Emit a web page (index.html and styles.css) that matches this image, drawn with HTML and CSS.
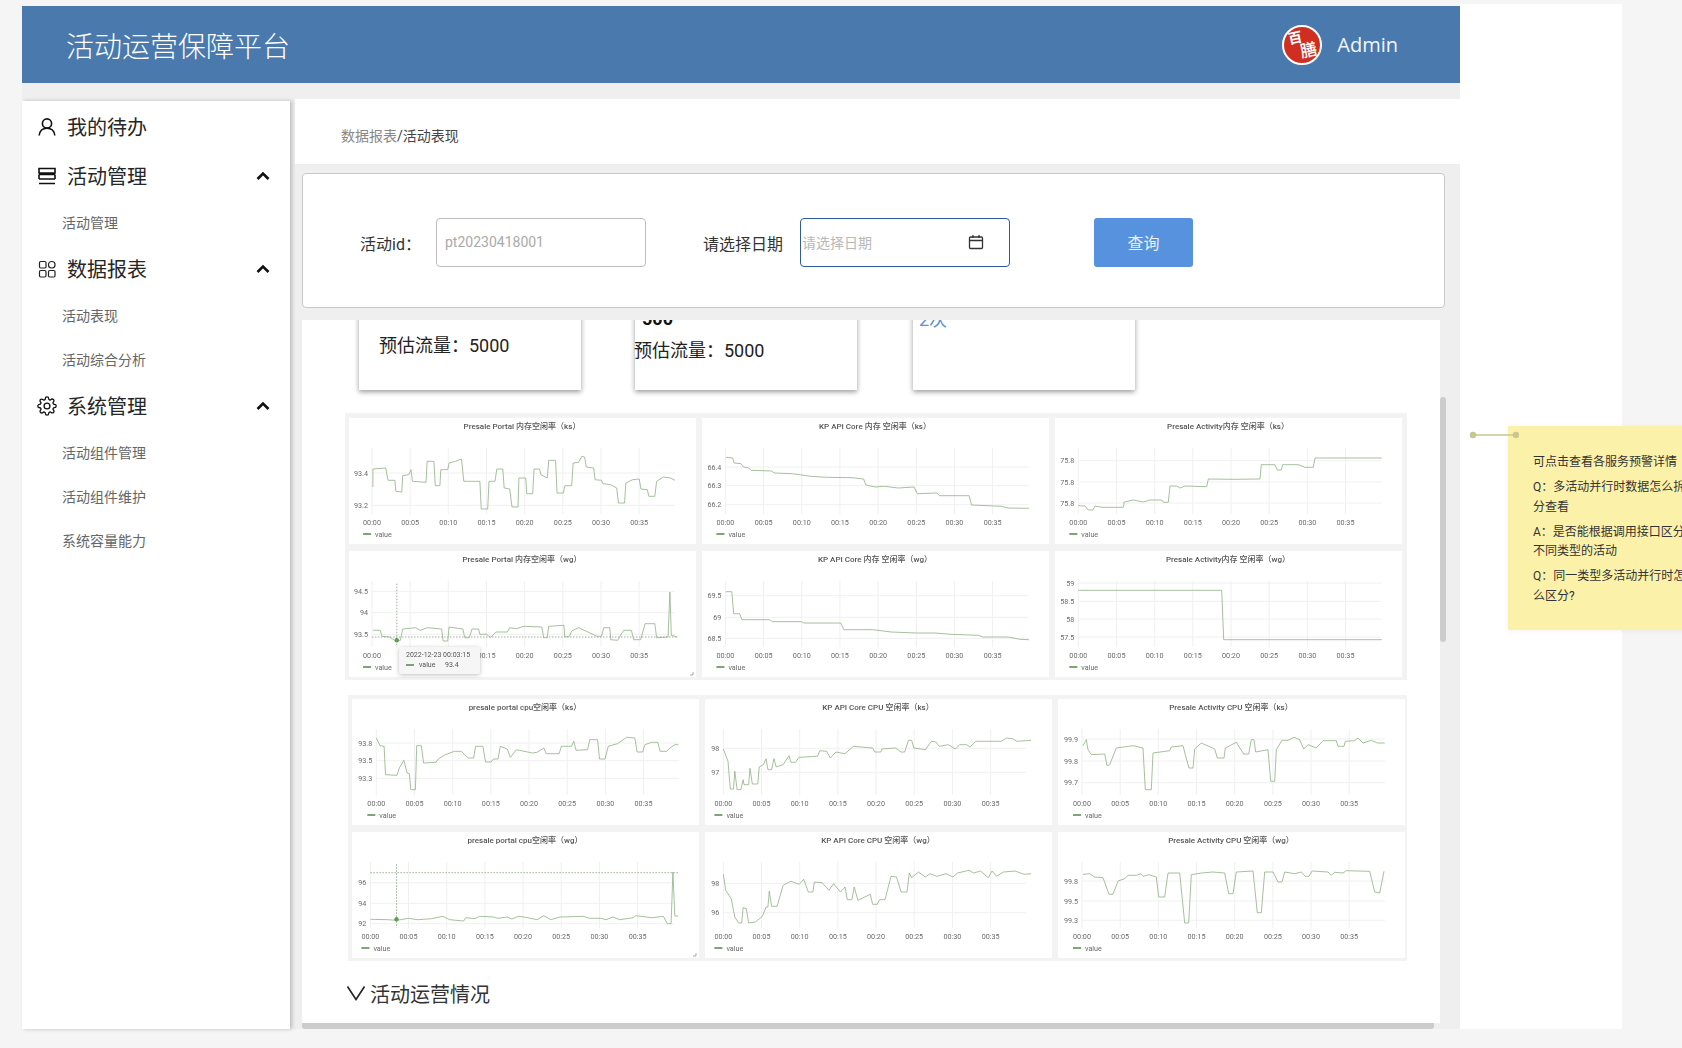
FILE: index.html
```html
<!DOCTYPE html>
<html lang="zh-CN">
<head>
<meta charset="utf-8">
<title>活动运营保障平台</title>
<link rel="stylesheet" href="styles.css">
</head>
<body>
<div class="app">
  <div class="main">
    <header class="topbar">
      <h1 class="brand">活动运营保障平台</h1>
      <div class="user">
        <span class="logo"><span class="logo-a">百</span><span class="logo-b">膳</span></span>
        <span class="user-name">Admin</span>
      </div>
    </header>
    <div class="workspace">
      <nav class="sidebar">
        <div class="nav-item">
          <svg class="nav-icon" viewBox="0 0 20 20"><circle cx="10" cy="6.5" r="4.6"/><path d="M2.2 18.5c.5-4.5 3.6-7.2 7.8-7.2s7.300 2.700 7.800 7.200"/></svg>
          <span>我的待办</span>
        </div>
        <div class="nav-item">
          <svg class="nav-icon" viewBox="0 0 20 20"><path d="M2 2.500h16v4.500h-16zM2 8.500h16M2 13h16M2 17.500h16"/><path d="M2 8.500v4.500M18 8.500v4.500"/></svg>
          <span>活动管理</span>
          <svg class="chev" viewBox="0 0 14 10"><path d="M1.500 8 7 2.500 12.500 8"/></svg>
        </div>
        <a class="nav-sub">活动管理</a>
        <div class="nav-item">
          <svg class="nav-icon nav-icon-thin" viewBox="0 0 20 20"><rect x="2.500" y="2.500" width="6.500" height="6.500" rx="1.200"/><rect x="11.500" y="2.500" width="6.500" height="6.500" rx="3"/><rect x="2.500" y="11.500" width="6.500" height="6.500" rx="1.200"/><rect x="11.500" y="11.500" width="6.500" height="6.500" rx="1.200"/></svg>
          <span>数据报表</span>
          <svg class="chev" viewBox="0 0 14 10"><path d="M1.500 8 7 2.500 12.500 8"/></svg>
        </div>
        <a class="nav-sub">活动表现</a>
        <a class="nav-sub">活动综合分析</a>
        <div class="nav-item">
          <svg class="nav-icon" viewBox="0 0 24 24"><circle cx="12" cy="12" r="3.500"/><path d="M19.400 15a1.650 1.650 0 0 0 .33 1.820l.06.06a2 2 0 0 1 0 2.830 2 2 0 0 1-2.830 0l-.06-.06a1.650 1.650 0 0 0-1.820-.33 1.650 1.650 0 0 0-1 1.510V21a2 2 0 0 1-2 2 2 2 0 0 1-2-2v-.09A1.650 1.650 0 0 0 9 19.400a1.650 1.650 0 0 0-1.820.33l-.06.06a2 2 0 0 1-2.830 0 2 2 0 0 1 0-2.830l.06-.06a1.650 1.650 0 0 0 .33-1.820 1.650 1.650 0 0 0-1.510-1H3a2 2 0 0 1-2-2 2 2 0 0 1 2-2h.09A1.650 1.650 0 0 0 4.600 9a1.650 1.650 0 0 0-.33-1.820l-.06-.06a2 2 0 0 1 0-2.830 2 2 0 0 1 2.830 0l.06.06a1.650 1.650 0 0 0 1.820.33H9a1.650 1.650 0 0 0 1-1.510V3a2 2 0 0 1 2-2 2 2 0 0 1 2 2v.09a1.650 1.650 0 0 0 1 1.510 1.650 1.650 0 0 0 1.820-.33l.06-.06a2 2 0 0 1 2.830 0 2 2 0 0 1 0 2.830l-.06.06a1.650 1.650 0 0 0-.33 1.820V9a1.650 1.650 0 0 0 1.510 1H21a2 2 0 0 1 2 2 2 2 0 0 1-2 2h-.09a1.650 1.650 0 0 0-1.510 1z"/></svg>
          <span>系统管理</span>
          <svg class="chev" viewBox="0 0 14 10"><path d="M1.500 8 7 2.500 12.500 8"/></svg>
        </div>
        <a class="nav-sub">活动组件管理</a>
        <a class="nav-sub">活动组件维护</a>
        <a class="nav-sub">系统容量能力</a>
      </nav>
      <section class="content">
        <div class="crumbs"><span class="crumb-parent">数据报表</span>/活动表现</div>
        <form class="filter">
          <label class="filter-label label-id">活动id：</label>
          <div class="field field-id"><span class="ph ph-id">pt20230418001</span></div>
          <label class="filter-label label-date">请选择日期</label>
          <div class="field field-date">
            <span class="ph ph-date">请选择日期</span>
            <svg class="cal" viewBox="0 0 16 16"><rect x="1.500" y="3" width="13" height="11.500" rx="1"/><path d="M1.500 6.500h13M5 1v3M11 1v3"/></svg>
          </div>
          <div class="btn">查询</div>
        </form>
        <div class="pane">
          <div class="scroll">
            <div class="cards">
              <div class="card"><p class="card-text t1">预估流量：5000</p></div>
              <div class="card"><p class="card-bold">500</p><p class="card-text t2">预估流量：5000</p></div>
              <div class="card"><p class="card-link">2次</p></div>
            </div>
            <div class="chart-group group-a" data-group="a"></div>
            <div class="chart-group group-b" data-group="b"></div>
            <div class="section-title">
              <svg class="section-chev" viewBox="0 0 20 16"><path d="M1.500 1.500 10 14.500 18.500 1.500"/></svg>
              <span>活动运营情况</span>
            </div>
          </div>
          <div class="vbar"></div>
          <div class="hbar"></div>
        </div>
      </section>
    </div>
  </div>
  <div class="blank"></div>
</div>
<svg class="connector" viewBox="0 0 50 10"><path d="M4 5h43"/><circle cx="4" cy="5" r="2.500"/><circle cx="47" cy="5" r="2.500"/></svg>
<aside class="note">
  <p>可点击查看各服务预警详情</p>
  <p>Q：多活动并行时数据怎么拆分查看</p>
  <p>A：是否能根据调用接口区分不同类型的活动</p>
  <p>Q：同一类型多活动并行时怎么区分?</p>
</aside>
<script src="charts.js"></script>
</body>
</html>
```

FILE: styles.css
```css
* { box-sizing: border-box; }
html, body { margin: 0; height: 100%; overflow: hidden; }
body {
  background: #f5f5f6;
  padding: 6px 0 0 22px;
  font-family: Roboto, "Noto Sans CJK SC", sans-serif;
  color: #333;
  position: relative;
}
p, h1 { margin: 0; font-weight: 400; }

.app { display: flex; width: 1600px; height: 1023px; }
.main { width: 1438px; display: flex; flex-direction: column; background: #efefef; }
.blank { flex: 1; background: #fff; margin-top: -2px; }

.topbar {
  height: 77px; background: #4a7aad; color: #fff;
  display: flex; align-items: center; justify-content: space-between;
  padding: 0 62px 0 44px; flex: none;
}
.brand { font-size: 28px; font-weight: 300; }
.user { display: flex; align-items: center; gap: 15px; }
.logo {
  width: 40px; height: 40px; border-radius: 50%; background: #cf2e20;
  border: 2px solid #fff; position: relative; overflow: hidden; display: block;
}
.logo-a { position: absolute; left: 4px; top: 3px; font-size: 14px; line-height: 16px; color: #fff; font-weight: 700; transform: rotate(-12deg); }
.logo-b { position: absolute; left: 16px; top: 13px; font-size: 17px; line-height: 20px; color: #fff; font-weight: 500; transform: rotate(-12deg); }
.user-name { font-family: "Open Sans", sans-serif; font-size: 20px; color: #f2f6fa; }

.workspace { flex: 1; display: flex; min-height: 0; }
.sidebar {
  width: 268px; margin-top: 18px; padding-top: 1px; background: #fff;
  box-shadow: 2px 0 4px rgba(0,0,0,.22); flex: none; position: relative;
}
.nav-item {
  height: 49px; display: flex; align-items: center; padding: 0 20px 0 15px;
  font-size: 20px; color: #262626;
}
.nav-item span { margin-left: 10px; flex: 1; }
.nav-icon { width: 20px; height: 20px; fill: none; stroke: #111; stroke-width: 1.600; flex: none; }
.nav-icon-thin { stroke-width: 1.200; stroke: #222; }
.chev { width: 14px; height: 10px; fill: none; stroke: #111; stroke-width: 2.600; flex: none; }
.nav-sub { display: flex; align-items: center; height: 44px; padding-left: 40px; font-size: 14px; color: #666; }

.content { width: 1170px; margin-top: 16px; padding-left: 5px; display: flex; flex-direction: column; flex: none; }
.crumbs { height: 65px; background: #fff; padding: 0 0 0 46px; line-height: 75px; font-size: 14px; color: #444; flex: none; }
.crumb-parent { color: #888; }
.filter {
  margin: 9px 15px 0 7px; height: 135px; background: #fff; flex: none;
  border: 1px solid #c8c8c8; border-radius: 4px; display: flex; align-items: center; padding-top: 3px;
}
.filter-label { font-size: 16px; color: #333; position: relative; top: 1px; }
.label-id { margin-left: 57px; width: 76px; }
.label-date { margin-left: 57px; width: 97px; }
.field { height: 49px; border-radius: 4px; display: flex; align-items: center; background: #fff; }
.field-id { width: 210px; border: 1px solid #bdbdbd; padding-left: 8px; }
.field-date { width: 210px; border: 1px solid #2f5b9b; padding-left: 1px; justify-content: space-between; padding-right: 25px; }
.ph { font-size: 14px; color: #aaa; }
.ph-date { color: #b8b8b8; }
.cal { width: 16px; height: 16px; fill: none; stroke: #333; stroke-width: 1.300; }
.btn {
  margin-left: 84px; width: 99px; height: 49px; border-radius: 3px; background: #5692dd;
  color: #e8f0fa; font-size: 16px; display: flex; align-items: center; justify-content: center;
}

.pane { margin: 12px 0 0 7px; width: 1138px; flex: 1; position: relative; display: flex; flex-direction: column; min-height: 0; }
.scroll { height: 703px; background: #fff; overflow: hidden; flex: none; }
.vbar { position: absolute; left: 1138px; top: 77px; width: 6px; height: 245px; background: #ccc; border-radius: 3px; }
.hbar { height: 6px; width: 1132px; background: #ccc; border-radius: 0 0 3px 3px; }

.cards { display: flex; margin: -60px 0 0 57px; }
.card { width: 222px; height: 130px; background: #fff; box-shadow: 0 2px 5px rgba(0,0,0,.4); margin-right: 54px; position: relative; flex: none; }
.card:nth-child(2) { margin-right: 56px; }
.card-text { font-size: 18px; line-height: 26px; color: #222; white-space: nowrap; }
.t1 { padding: 73px 0 0 20px; }
.t2 { margin: 8px 0 0 -1px; }
.card-bold { font-size: 18px; font-weight: 700; line-height: 22px; color: #111; padding: 48px 0 0 7px; }
.card-link { font-size: 18px; line-height: 22px; color: #5b93d3; padding: 49px 0 0 6px; }

.chart-group { display: grid; grid-template-columns: repeat(3, 347px); grid-auto-rows: 126px; gap: 7px 6px; background: #f3f3f3; }
.group-a { margin: 23px 0 0 43px; width: 1062px; padding: 5px 4px 3px; }
.group-b { margin: 15px 0 0 46px; width: 1059px; padding: 4px 2px 3px 4px; }
.panel { background: #fff; }
.plot { display: block; width: 347px; height: 126px; filter: blur(.25px); overflow: visible; }
.title { font-size: 8px; font-weight: 500; fill: #555; text-anchor: middle; }
.tick { font-size: 7.200px; fill: #6b6b6b; }
.tick-y { text-anchor: end; }
.tick-x { text-anchor: middle; }
.grid { stroke: #f0f0f0; stroke-width: 1; }
.series { fill: none; stroke: #8fb085; stroke-width: .8; stroke-linejoin: round; }
.swatch { stroke: #5e8f52; stroke-width: 1.600; }
.cross { stroke: #5d7a55; stroke-width: .6; stroke-dasharray: 1.500 1.500; }
.dot { fill: #5ea04f; }
.tip { fill: #f6f6f6; filter: drop-shadow(0 1px 2px rgba(0,0,0,.25)); }
.tip-text { font-size: 7px; fill: #555; }
.corner { fill: none; stroke: #888; stroke-width: .7; }

.section-title { display: flex; align-items: center; gap: 4px; margin: 21px 0 0 44px; font-size: 20px; color: #333; height: 22px; }
.section-chev { width: 20px; height: 16px; fill: none; stroke: #222; stroke-width: 1.600; flex: none; }

.connector { position: absolute; left: 1469px; top: 430px; width: 50px; height: 10px; stroke: #c7c78f; fill: #c7c78f; stroke-width: 1.500; z-index: 2; }
.note {
  position: absolute; left: 1508px; top: 426px; width: 200px; height: 204px;
  background: #fbf1a9; padding: 27px 19px 0 25px; font-size: 12px; line-height: 19.500px; color: #333;
  box-shadow: 0 1px 5px rgba(0,0,0,.06);
}
.note p { width: 156px; margin-bottom: 5.500px; }
```

FILE: charts.js
```js
var NS = 2.178, WS = 3;
var CHARTS = {
  a: [
    { title: "Presale Portal 内存空闲率（ks）", sx: NS, zl: 20, zt: 25, x0: 70, ticks: [["93.4",190],["93.2",287]],
      pts: "72,232 72,178 100,175 105,212 120,212 122,245 135,247 137,198 150,195 155,180 158,215 188,218 190,155 205,155 208,228 218,228 220,180 235,180 238,160 252,155 265,148 270,215 305,215 308,298 322,298 325,215 338,215 342,178 355,178 358,235 370,238 375,292 388,292 390,205 405,205 407,252 420,252 423,178 435,178 438,195 452,205 455,152 470,152 473,250 487,250 490,228 505,228 508,160 520,158 527,140 533,142 537,172 553,175 556,210 570,212 573,222 590,225 603,235 607,280 620,280 623,220 638,210 652,208 656,238 670,240 673,260 686,260 690,215 705,202 720,205 730,212" },
    { title: "KP API Core 内存 空闲率（ks）", sx: NS, zl: 788, zt: 25, x0: 839, ticks: [["66.4",172],["66.3",228],["66.2",285]],
      pts: "840,143 855,145 858,160 873,162 878,172 890,175 895,182 940,184 945,190 985,192 1025,200 1060,203 1115,204 1140,208 1145,226 1165,232 1185,230 1215,235 1250,232 1257,252 1300,250 1305,258 1370,258 1375,286 1440,290 1455,295 1500,296" },
    { title: "Presale Activity内存 空闲率（ks）", sx: WS, zl: 45, zt: 22, x0: 115, ticks: [["75.8",150],["75.8",214],["75.8",277]],
      pts: "115,285 135,286 145,298 158,298 165,286 185,290 250,290 253,274 280,268 310,274 330,268 365,268 370,275 385,275 390,226 410,226 420,232 435,226 500,228 505,205 580,206 660,205 664,162 705,162 712,178 724,178 728,162 775,162 795,170 820,170 825,142 1025,142" },
    { title: "Presale Portal 内存空闲率（wg）", sx: NS, zl: 20, zt: 422, x0: 70, ticks: [["94.5",543],["94",607],["93.5",672]],
      pts: "72,660 88,660 92,678 108,680 120,690 132,690 137,656 165,652 175,660 190,652 222,656 225,692 235,692 238,650 268,656 272,682 282,682 288,656 302,656 305,672 320,672 328,682 340,665 365,665 370,652 385,655 400,648 440,650 444,682 452,682 455,648 488,645 490,680 500,678 505,662 520,652 540,665 560,678 570,678 575,652 588,652 590,688 605,690 618,660 635,660 640,688 655,688 665,640 686,640 690,682 715,680 719,545 722,675 735,680",
      cross: { x: 124, y: 680, y0: 520, y1: 710, x1: 735, dotY: 690 }, corner: true,
      tip: { time: "2022-12-23 00:03:15", value: "93.4" } },
    { title: "KP API Core 内存 空闲率（wg）", sx: NS, zl: 788, zt: 422, x0: 839, ticks: [["69.5",556],["69",621],["68.5",684]],
      pts: "840,544 853,544 857,610 870,610 875,628 935,628 942,634 1005,634 1010,638 1090,638 1097,658 1160,658 1200,665 1255,668 1295,668 1330,672 1390,675 1400,680 1455,680 1480,687 1500,688" },
    { title: "Presale Activity内存 空闲率（wg）", sx: WS, zl: 45, zt: 422, x0: 115, ticks: [["59",518],["58.5",573],["58",626],["57.5",680]],
      pts: "115,540 545,540 551,688 1025,688" }
  ],
  b: [
    { title: "presale portal cpu空闲率（ks）", sx: NS, zl: 27, zt: 28, x0: 80, ticks: [["93.8",160],["93.5",213],["93.3",266]],
      pts: "80,145 88,168 97,170 100,255 125,257 130,235 140,212 147,250 152,252 155,300 165,300 168,168 178,168 183,220 210,218 215,208 230,195 250,185 265,185 280,205 292,205 296,170 312,170 318,217 330,217 335,208 345,208 350,170 365,178 372,203 385,180 420,190 430,188 445,175 450,192 478,192 483,170 505,170 510,155 515,182 540,180 545,150 562,150 566,208 578,208 585,170 605,162 625,143 643,145 648,187 660,187 665,165 680,158 693,158 698,185 712,185 720,175 730,165 738,165" },
    { title: "KP API Core CPU 空闲率（ks）", sx: NS, zl: 795, zt: 28, x0: 835, ticks: [["98",176],["97",248]],
      pts: "835,178 845,215 850,298 857,298 860,245 865,300 873,300 878,270 880,285 890,285 893,236 898,283 910,283 913,232 922,225 928,207 932,240 940,240 945,207 950,232 965,225 978,198 982,218 992,218 1000,203 1040,200 1045,183 1060,185 1068,205 1080,187 1100,192 1118,170 1160,175 1165,187 1178,187 1180,178 1210,175 1222,187 1230,187 1238,152 1245,152 1250,175 1275,180 1288,155 1298,157 1305,170 1325,165 1340,178 1350,165 1365,165 1372,172 1385,155 1440,155 1452,145 1465,147 1475,155 1505,152" },
    { title: "Presale Activity CPU 空闲率（ks）", sx: WS, zl: 50, zt: 28, x0: 122, ticks: [["99.9",148],["99.8",214],["99.7",279]],
      pts: "125,168 135,150 140,180 150,195 190,193 197,228 205,225 225,175 275,168 305,175 312,300 330,300 335,190 385,183 390,172 425,168 432,195 443,235 455,235 460,178 480,160 520,178 528,205 548,205 552,175 585,158 607,193 622,193 630,150 638,150 643,187 680,180 688,275 700,275 705,180 722,152 740,152 758,143 775,150 787,178 800,165 825,175 845,153 885,153 890,170 908,170 912,155 940,153 950,145 965,160 990,152 1008,160 1030,160" },
    { title: "presale portal cpu空闲率（wg）", sx: NS, zl: 27, zt: 425, x0: 67, ticks: [["96",577],["94",639],["92",700]],
      pts: "67,687 105,688 125,690 150,684 170,688 200,685 225,678 240,688 270,692 275,682 295,685 305,678 335,680 345,684 365,680 375,686 390,678 410,682 430,688 445,676 460,688 480,680 530,678 545,684 570,684 580,688 595,680 610,688 640,682 645,676 680,682 705,678 714,700 722,700 726,545 730,677 738,677",
      cross: { x: 124, y: 547, y0: 522, y1: 712, x1: 740, dotY: 687 }, corner: true },
    { title: "KP API Core CPU 空闲率（wg）", sx: NS, zl: 795, zt: 425, x0: 835, ticks: [["98",579],["96",667]],
      pts: "835,552 840,600 852,625 860,680 868,698 875,698 878,652 885,655 890,698 905,695 920,678 928,650 932,650 935,602 940,648 952,648 965,585 982,573 1000,582 1010,567 1020,605 1030,605 1033,575 1050,577 1065,600 1075,580 1090,605 1100,590 1105,628 1115,628 1120,590 1128,630 1155,612 1160,642 1170,642 1175,628 1187,628 1200,558 1212,560 1222,605 1235,605 1240,548 1245,562 1260,545 1275,560 1285,550 1300,558 1320,550 1335,560 1345,548 1370,540 1380,548 1395,542 1412,562 1420,542 1430,558 1445,545 1470,542 1490,552 1505,550" },
    { title: "Presale Activity CPU 空闲率（wg）", sx: WS, zl: 50, zt: 425, x0: 122, ticks: [["99.8",572],["99.5",632],["99.3",690]],
      pts: "125,552 145,550 160,560 185,562 203,612 215,612 230,572 250,565 260,555 285,555 298,550 305,558 322,553 345,560 352,620 370,620 380,548 415,548 430,698 442,698 450,553 480,548 515,545 550,548 562,610 575,610 585,545 635,542 648,667 660,667 670,545 695,545 710,575 722,575 730,545 760,550 780,545 792,558 803,558 812,542 860,545 870,555 880,546 905,548 915,541 985,543 1000,605 1015,608 1028,543" }
  ]
};

function f(n) { return n.toFixed(1); }

function panelSvg(c) {
  var lx = function (z) { return (z - c.zl) / c.sx; };
  var ly = function (z) { return (z - c.zt) / 3; };
  var x0 = lx(c.x0), step = 38.17, right = x0 + 303;
  var s = '<svg class="plot" viewBox="0 0 347 126">';
  s += '<text class="title" x="173" y="11">' + c.title + '</text>';
  for (var i = 0; i < 8; i++) {
    var gx = f(x0 + i * step);
    s += '<line class="grid" x1="' + gx + '" x2="' + gx + '" y1="30" y2="96"/>';
    // The tooltip hides the 00:05 and 00:10 labels of its panel.
    if (!(c.tip && (i === 1 || i === 2))) {
      s += '<text class="tick tick-x" x="' + gx + '" y="107">00:' + ("0" + i * 5).slice(-2) + '</text>';
    }
  }
  c.ticks.forEach(function (t) {
    var y = ly(t[1]);
    s += '<line class="grid" x1="' + f(x0) + '" x2="' + f(right) + '" y1="' + f(y) + '" y2="' + f(y) + '"/>';
    s += '<text class="tick tick-y" x="' + f(x0 - 4) + '" y="' + f(y + 2.5) + '">' + t[0] + '</text>';
  });
  if (c.cross) {
    var k = c.cross, cx = lx(k.x);
    s += '<line class="cross" x1="' + f(cx) + '" x2="' + f(cx) + '" y1="' + f(ly(k.y0)) + '" y2="' + f(ly(k.y1)) + '"/>';
    s += '<line class="cross" x1="' + f(x0) + '" x2="' + f(lx(k.x1)) + '" y1="' + f(ly(k.y)) + '" y2="' + f(ly(k.y)) + '"/>';
  }
  var pts = c.pts.split(" ").map(function (p) {
    var a = p.split(",");
    return f(lx(+a[0])) + "," + f(ly(+a[1]));
  }).join(" ");
  s += '<polyline class="series" points="' + pts + '"/>';
  if (c.cross) {
    s += '<circle class="dot" cx="' + f(lx(c.cross.x)) + '" cy="' + f(ly(c.cross.dotY)) + '" r="2.200"/>';
  }
  s += '<line class="swatch" x1="' + f(x0 - 9) + '" x2="' + f(x0 - 1) + '" y1="116" y2="116"/>';
  s += '<text class="tick" x="' + f(x0 + 3) + '" y="118.500">value</text>';
  if (c.tip) {
    s += '<rect class="tip" x="50" y="96" width="81" height="27" rx="2"/>';
    s += '<text class="tip-text" x="57" y="105.500">' + c.tip.time + '</text>';
    s += '<line class="swatch" x1="57" x2="65" y1="114" y2="114"/>';
    s += '<text class="tip-text" x="70" y="116">value</text>';
    s += '<text class="tip-text" x="96" y="116">' + c.tip.value + '</text>';
  }
  if (c.corner) s += '<path class="corner" d="M344 121v3h-3"/>';
  return s + '</svg>';
}

document.querySelectorAll(".chart-group").forEach(function (el) {
  el.innerHTML = CHARTS[el.dataset.group].map(function (c) {
    return '<div class="panel">' + panelSvg(c) + '</div>';
  }).join("");
});
```
